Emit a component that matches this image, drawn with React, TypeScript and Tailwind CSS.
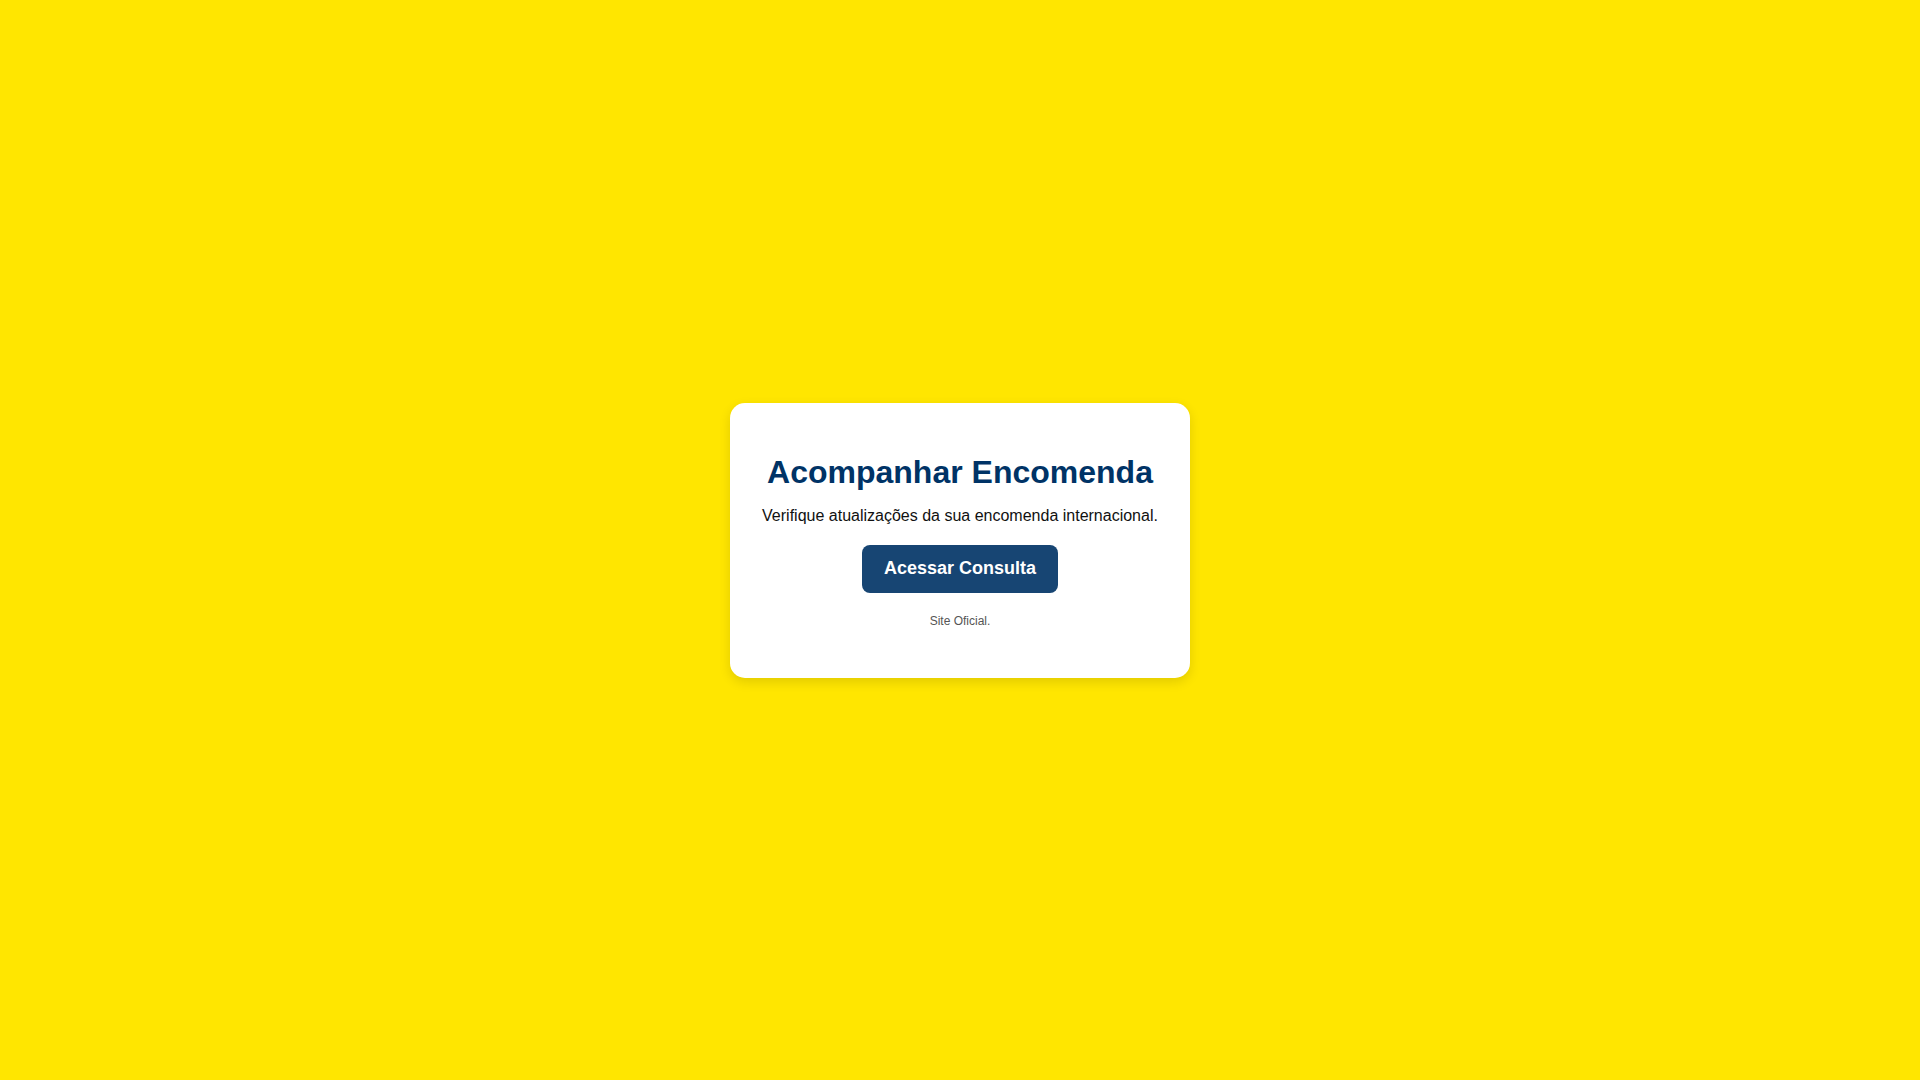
export default function App() {
  return (
    <div
      className="min-h-screen w-full flex items-center justify-center bg-[#FFE600]"
      style={{ fontFamily: '"Liberation Sans", Arial, sans-serif' }}
    >
      <div className="w-[460px] h-[275px] bg-white rounded-[15px] shadow-[0_4px_12px_rgba(0,0,0,0.12)] flex flex-col items-center pt-[51px] px-[20px] text-center">
        <h1 className="text-[32px] leading-[1.15] font-bold text-[#003366] m-0">
          Acompanhar Encomenda
        </h1>
        <p className="text-[16px] leading-[1.15] text-[#111111] mt-[17px]">
          Verifique atualizações da sua encomenda internacional.
        </p>
        <button className="mt-[19px] h-[48px] px-[22px] rounded-[8px] bg-[#174573] text-white text-[18px] font-bold leading-[1.15]">
          Acessar Consulta
        </button>
        <p className="mt-[22px] text-[12px] leading-[1.15] text-[#555555]">
          Site Oficial.
        </p>
      </div>
    </div>
  );
}
